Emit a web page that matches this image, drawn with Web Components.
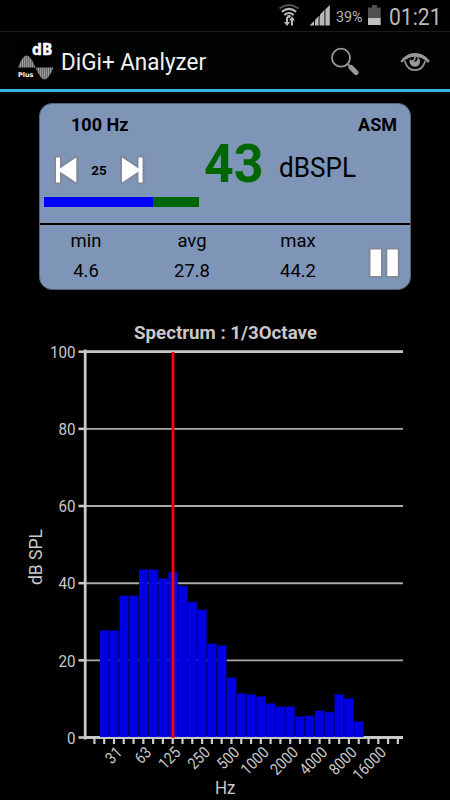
<!DOCTYPE html>
<html lang="en">
<head>
<meta charset="utf-8">
<title>DiGi+ Analyzer</title>
<style>
    body {
        margin: 0;
        background: #000;
        font-family: Roboto, sans-serif;
    }
</style>
</head>
<body>
<digi-app></digi-app>

<script>
class DigiElement extends HTMLElement {
    constructor() {
        super();
        this.shadow = this.attachShadow({mode: 'open'});
    }
    static create() {
        customElements.define(this.tag, this);
    }
}

class StatusBar extends DigiElement {
    static tag = 'status-bar';
    connectedCallback() {
        this.shadow.innerHTML = `
        <style>
            :host {
                display: flex;
                justify-content: flex-end;
                box-sizing: border-box;
                height: 32px;
                padding-right: 8px;
                color: #b9b9b9;
                border-bottom: 1px solid #1c1c1c;
            }
            svg { display: block; flex: none; }
            .battery { font-size: 15.500px; line-height: 34px; width: 28px; margin-left: 6px; white-space: nowrap; }
            .battery span { display: inline-block; transform: scaleX(.92); transform-origin: 0 50%; }
            .clock { font-size: 24px; line-height: 34px; width: 53px; white-space: nowrap; }
            .clock span { display: inline-block; transform: scaleX(.88); transform-origin: 0 50%; }
        </style>
        <svg width="52" height="31" viewBox="278 0 52 31">
            <g fill="none" stroke="#b9b9b9" stroke-width="2">
                <path d="M279.500 8.500Q289 1.500 298.500 8.500" stroke="#555"/>
                <path d="M281.800 11.800Q289 6 296.200 11.800"/>
                <path d="M284.300 15Q289 11 293.700 15"/>
            </g>
            <path d="M286.600 16Q289 14 291.400 16L289 18.500Z" fill="#b9b9b9"/>
            <path d="M286 17h2v5h2l-3 4l-3-4h2zM291 25.500v-5h-2l3-4l3 4h-2v5z" fill="#b9b9b9"/>
            <path d="M309.500 25.500h4.500v-4.500zM315 25.500h3.700v-9.500l-3.700 3.900zM320 25.500h4v-15.300l-4 4.500zM325.300 25.500h4.500V5l-4.500 4.500z" fill="#b9b9b9"/>
            <path d="M318.700 16h1.300v9.500h-1.300zM324 10h1.300v15.500H324z" fill="#555"/>
        </svg>
        <div class="battery"><span>39%</span></div>
        <svg width="25" height="31" viewBox="364 0 25 31">
            <path d="M372 5h5v2.500h3.700V18h-12.700V7.500h4z" fill="#505050"/>
            <path d="M368 18h12.700v7H368z" fill="#c0c0c0"/>
        </svg>
        <div class="clock"><span>01:21</span></div>`;
    }
}

class ActionBar extends DigiElement {
    static tag = 'action-bar';
    connectedCallback() {
        this.shadow.innerHTML = `
        <style>
            :host {
                display: flex;
                align-items: center;
                box-sizing: border-box;
                height: 60px;
                padding: 1px 16px 0 15px;
                background: #020404;
                border-bottom: 3px solid #33b5e5;
            }
            svg { display: block; flex: none; }
            h1 { flex: 1; margin: 2px 0 0 6px; font-size: 23.500px; font-weight: 400; color: #f3f3f3; line-height: 28px; }
            h1 span { display: inline-block; transform: scaleX(.955); transform-origin: 0 50%; }
            .eye { margin-left: 40px; }
        </style>
        <svg width="40" height="40" viewBox="15 41 40 40">
            <defs>
                <pattern id="stripe" width="2" height="4" patternUnits="userSpaceOnUse">
                    <rect width="2" height="4" fill="#666"/><rect width="1" height="4" fill="#999"/>
                </pattern>
            </defs>
            <rect x="15" y="41" width="40" height="40" fill="#000"/>
            <path d="M18 67.500Q22.500 55.500 26.500 55.500Q30.500 55.500 35.500 67.500Z" fill="url(#stripe)"/>
            <path d="M35.500 67.500H53.500Q48.500 79.500 44.500 79.500Q40.500 79.500 35.500 67.500Z" fill="url(#stripe)"/>
            <text x="32" y="55" font-family="DejaVu Sans" font-weight="700" font-size="15" textLength="20.500" lengthAdjust="spacingAndGlyphs" fill="#fff" stroke="#fff" stroke-width=".4">dB</text>
            <text x="18" y="76.500" font-family="DejaVu Sans" font-weight="700" font-size="6.500" textLength="15.500" lengthAdjust="spacingAndGlyphs" fill="#fff">Plus</text>
        </svg>
        <h1><span>DiGi+ Analyzer</span></h1>
        <svg width="30" height="30" viewBox="330 46 30 30">
            <circle cx="341" cy="57.700" r="9" fill="none" stroke="#999" stroke-width="1.800"/>
            <path d="M347.500 64l3.500 3.500" stroke="#999" stroke-width="2"/>
            <path d="M351 67.500l5 5" stroke="#999" stroke-width="5" stroke-linecap="round"/>
        </svg>
        <svg class="eye" width="34" height="30" viewBox="400 46 34 30">
            <path d="M400.300 61.500Q406 53 415 53Q424 53 429.700 60.800L428 63Q422.500 56.800 415 56.800Q408 56.800 402 62.500Z" fill="#999"/>
            <path d="M404.800 61Q407.500 70.200 415 70.200Q422.500 70.200 425.200 61" fill="none" stroke="#999" stroke-width="1.700"/>
            <path d="M413.500 56A3 3 0 0 1 412.500 60.200Q411 60.500 410 59Q408.800 62 410.500 64.500Q412.500 67 415.500 66.800Q419.500 66 420 62Q420.200 58.500 417 56.500Q418.300 59.500 416.500 61Q415 62 413.300 61.200Q416.500 60 415.500 56Z" fill="#999"/>
        </svg>`;
    }
}

class LevelStat extends DigiElement {
    static tag = 'level-stat';
    connectedCallback() {
        this.shadow.innerHTML = `
        <style>
            :host { display: block; text-align: center; font-size: 19px; line-height: 30px; }
            div { white-space: nowrap; transform: scaleX(.97); }
        </style>
        <div><slot name="label"></slot></div>
        <div><slot></slot></div>`;
    }
}

class LevelCard extends DigiElement {
    static tag = 'level-card';
    connectedCallback() {
        this.shadow.innerHTML = `
        <style>
            :host {
                display: block;
                box-sizing: border-box;
                width: 372px;
                height: 187px;
                margin: 11px 0 0 39px;
                border: 1px solid #546580;
                border-radius: 13px;
                background: #7f95b7;
                color: #000;
                overflow: hidden;
            }
            svg { display: block; flex: none; }
            .top { height: 119px; border-bottom: 2px solid #000; }
            .head { display: flex; justify-content: space-between; padding: 9px 13px 0 31px; font-size: 18px; line-height: 24px; font-weight: 700; }
            .row { display: flex; align-items: center; height: 50px; margin-top: 8px; }
            .prev { margin-left: 10px; }
            .band { width: 34px; text-align: center; font-size: 13.500px; font-weight: 700; }
            .value { width: 62px; margin-left: 56px; font-size: 54px; line-height: 54px; font-weight: 700; color: #060; transform: translateY(-6px) scaleX(.96); transform-origin: 0 50%; }
            .unit { margin-left: 13px; font-size: 27.500px; transform: translateY(-3px) scaleX(.95); transform-origin: 0 50%; white-space: nowrap; }
            .meter { display: flex; width: 155px; height: 10px; margin: 2px 0 0 4px; }
            .meter i { width: 108.500px; background: #00f; }
            .meter b { flex: 1; background: #060; }
            .stats { display: flex; margin-left: -7px; }
            level-stat { width: 106px; padding-top: 1px; }
            .pause { margin: 20px 0 0 15px; }
        </style>
        <div class="top">
            <div class="head"><span>100 Hz</span><span>ASM</span></div>
            <div class="row">
                <svg class="prev" width="32" height="34" viewBox="50 153 32 34">
                    <g fill="#fff" stroke="#7f899b" stroke-width="4" paint-order="stroke" stroke-linejoin="round"><path d="M56 157.500h4v11L76.300 157.500v25L60 171.500V182.500H56z"/></g>
                </svg>
                <span class="band">25</span>
                <svg width="32" height="34" viewBox="116 153 32 34">
                    <g fill="#fff" stroke="#7f899b" stroke-width="4" paint-order="stroke" stroke-linejoin="round"><path d="M142.500 157.500h-4v11L122 157.500v25l16.500-11V182.500H142.500z"/></g>
                </svg>
                <span class="value">43</span>
                <span class="unit">dBSPL</span>
            </div>
            <div class="meter"><i></i><b></b></div>
        </div>
        <div class="stats">
            <level-stat><span slot="label">min</span>4.6</level-stat>
            <level-stat><span slot="label">avg</span>27.8</level-stat>
            <level-stat><span slot="label">max</span>44.2</level-stat>
            <svg class="pause" width="36" height="36" viewBox="366 245 36 36">
                <g fill="#fff" stroke="#7f899b" stroke-width="4" paint-order="stroke" stroke-linejoin="round"><path d="M370.500 249.500h10.500v26.500h-10.500zM387.300 249.500h10.500v26.500h-10.500z"/></g>
            </svg>
        </div>`;
    }
}

class SpectrumChart extends DigiElement {
    static tag = 'spectrum-chart';
    // y of each band's top edge, 20 Hz upwards
    tops = [630, 630, 595.3, 595.3, 569.2, 569.2, 578, 571.8, 585.5, 601.5, 609.3, 643.3, 645, 677.2,
        693, 694, 696, 703, 706.3, 706, 716, 715.3, 710.2, 711.6, 694, 698, 721];
    freqs = [31, 63, 125, 250, 500, 1000, 2000, 4000, 8000, 16000];

    connectedCallback() {
        const base = 737;
        let grid = '', bars = '', ticks = '', labels = '';
        for (let v = 0; v <= 100; v += 20) {
            const y = 737.5 - v * 3.858;
            const major = v === 0 || v === 100;
            grid += `<path d="M86 ${y}H403" stroke="${major ? '#c8c8c8' : '#aaa'}" stroke-width="${major ? 2.8 : 1.9}"/>
                <path d="M78.500 ${y}H86" stroke="#ccc" stroke-width="2.500"/>
                <text transform="translate(75.500 ${y + 6.3}) scale(.95 1)" text-anchor="end">${v}</text>`;
        }
        this.tops.forEach((y, i) => {
            const x = 100 + i * 9.775;
            bars += `<rect x="${x}" y="${y}" width="9.775" height="${base - y}" fill="#00008c" fill-opacity=".7"/>
                <rect x="${x}" y="${y + .8}" width="8.600" height="${base - y - .8}" fill="#0000ee" fill-opacity=".93"/>`;
        });
        for (let i = 0; i < 32; i++) {
            ticks += `<path d="M${94.4 + i * 9.79} 739v5"/>`;
        }
        this.freqs.forEach((f, i) => {
            const x = 123 + i * 29.35;
            labels += `<text transform="translate(${x} 753.500) rotate(-45) scale(.88 1)" text-anchor="end">${f}</text>`;
        });
        this.shadow.innerHTML = `
        <style>
            :host { display: block; margin-top: 20px; }
            svg { display: block; }
            text { font-size: 16px; fill: #c8c8c8; }
            .title { font-size: 19px; font-weight: 700; }
            .axis { font-size: 18px; }
        </style>
        <svg width="450" height="490" viewBox="0 310 450 490">
            <text class="title" x="134" y="339" textLength="183" lengthAdjust="spacingAndGlyphs">Spectrum : 1/3Octave</text>
            ${grid}
            ${bars}
            <path d="M85.200 349.500V739.500" stroke="#c8c8c8" stroke-width="2.800"/>
            <g stroke="#ccc" stroke-width="2.200">${ticks}</g>
            <path d="M173 352V738" stroke="#f00" stroke-width="2.800"/>
            ${labels}
            <text class="axis" transform="translate(41.500 585) rotate(-90)" textLength="56" lengthAdjust="spacingAndGlyphs">dB SPL</text>
            <text class="axis" x="215" y="794" textLength="20.500" lengthAdjust="spacingAndGlyphs">Hz</text>
        </svg>`;
    }
}

class DigiApp extends DigiElement {
    static tag = 'digi-app';
    connectedCallback() {
        this.shadow.innerHTML = `
        <style>
            :host { display: block; width: 450px; height: 800px; overflow: hidden; background: #000; }
        </style>
        <status-bar></status-bar>
        <action-bar></action-bar>
        <level-card></level-card>
        <spectrum-chart></spectrum-chart>`;
    }
}

StatusBar.create();
ActionBar.create();
LevelStat.create();
LevelCard.create();
SpectrumChart.create();
DigiApp.create();
</script>
</body>
</html>
